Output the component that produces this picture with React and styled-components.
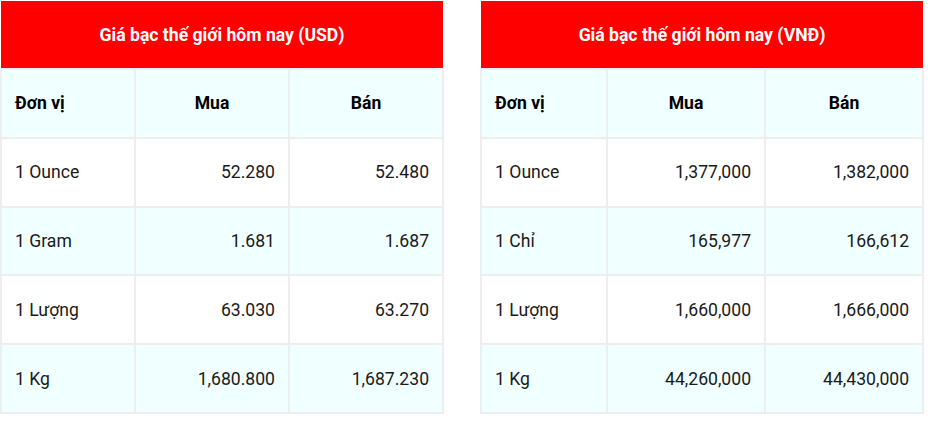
import React from "react";
import styled, { createGlobalStyle } from "styled-components";

const GlobalStyle = createGlobalStyle`
  body {
    margin: 0;
    background: #ffffff;
    font-family: Roboto, "Noto Sans", Arial, sans-serif;
  }
`;

const usd = {
  title: "Giá bạc thế giới hôm nay (USD)",
  cols: [134, 154, 154],
  rows: [
    ["1 Ounce", "52.280", "52.480"],
    ["1 Gram", "1.681", "1.687"],
    ["1 Lượng", "63.030", "63.270"],
    ["1 Kg", "1,680.800", "1,687.230"],
  ],
};

const vnd = {
  title: "Giá bạc thế giới hôm nay (VNĐ)",
  cols: [126, 158, 158],
  rows: [
    ["1 Ounce", "1,377,000", "1,382,000"],
    ["1 Chỉ", "165,977", "166,612"],
    ["1 Lượng", "1,660,000", "1,666,000"],
    ["1 Kg", "44,260,000", "44,430,000"],
  ],
};

const PriceTable = ({ data }) => (
  <Table>
    <colgroup>
      {data.cols.map((w, i) => (
        <col key={i} style={{ width: w }} />
      ))}
    </colgroup>
    <thead>
      <tr>
        <Title colSpan={3}>{data.title}</Title>
      </tr>
      <Row $shade>
        <Head>Đơn vị</Head>
        <Head $center>Mua</Head>
        <Head $center>Bán</Head>
      </Row>
    </thead>
    <tbody>
      {data.rows.map((r, i) => (
        <Row key={r[0]} $shade={i % 2 === 1}>
          <Cell>{r[0]}</Cell>
          <Cell $right>{r[1]}</Cell>
          <Cell $right>{r[2]}</Cell>
        </Row>
      ))}
    </tbody>
  </Table>
);

const App = () => (
  <>
    <GlobalStyle />
    <Wrapper>
      <PriceTable data={usd} />
      <PriceTable data={vnd} />
    </Wrapper>
  </>
);

export default App;

const Wrapper = styled.div`
  display: flex;
  flex-direction: row;
  gap: 36px;
  padding: 1px 0 0 0;
  align-items: flex-start;
`;

const Table = styled.table`
  width: 442px;
  table-layout: fixed;
  border-collapse: collapse;
`;

const Title = styled.th`
  height: 67px;
  padding: 0;
  background: #ff0000;
  color: #ffffff;
  font-size: 17.6px;
  font-weight: 700;
  text-align: center;
  vertical-align: middle;
`;

const Row = styled.tr`
  background: ${(p) => (p.$shade ? "#f0ffff" : "#ffffff")};
`;

const Head = styled.th`
  height: 68.8px;
  box-sizing: border-box;
  padding: 0 13px;
  border: 2px solid #eeeeee;
  color: #000000;
  font-size: 17.6px;
  font-weight: 700;
  text-align: ${(p) => (p.$center ? "center" : "left")};
`;

const Cell = styled.td`
  height: 68.8px;
  box-sizing: border-box;
  padding: 0 13px;
  border: 2px solid #eeeeee;
  color: #1a1a1a;
  font-size: 17.6px;
  text-align: ${(p) => (p.$right ? "right" : "left")};
`;
